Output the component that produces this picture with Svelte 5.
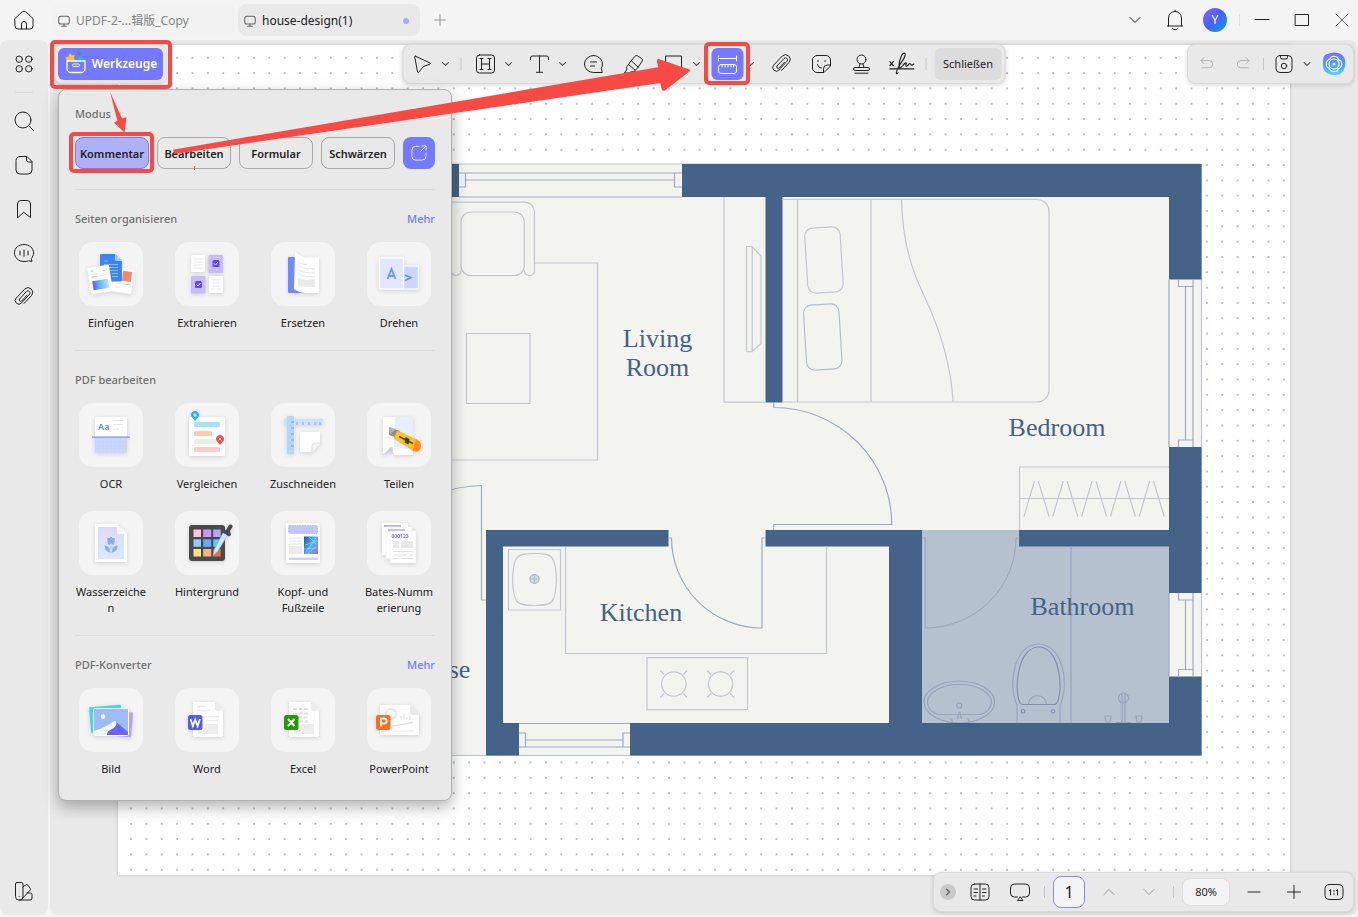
<script lang="ts">
  interface Tool {
    label: string;
    art: string;
  }

  interface Section {
    title: string;
    more: boolean;
    tools: Tool[];
  }

  // 24x24 line icons, drawn with the current text colour.
  const icons: Record<string, string> = {
    home: '<path d="M3 10.5 10.2 3.9a2.6 2.6 0 0 1 3.6 0L21 10.5V18a3 3 0 0 1-3 3H6a3 3 0 0 1-3-3ZM9.5 21v-5a2.5 2.5 0 0 1 5 0v5"/>',
    monitor: '<rect x="3" y="4" width="18" height="13" rx="3.5"/><path d="M8 21h8M12 17v4"/>',
    plus: '<path d="M12 5.5v13M5.5 12h13"/>',
    minus: '<path d="M6 12h12"/>',
    chevronDown: '<path d="m7 9.500 5 5 5-5"/>',
    chevronUp: '<path d="m7 14.500 5-5 5 5"/>',
    bell: '<path d="M5.500 18V10a6.500 6.500 0 0 1 13 0v8M4.500 18h15M12 3.500V2.200M9.500 20.500a3 3 0 0 0 5 0"/>',
    minimize: '<path d="M5 11.500h14"/>',
    maximize: '<rect x="5.500" y="6.500" width="13" height="11"/>',
    close: '<path d="m6 6 12 12M18 6 6 18"/>',
    grid: '<circle cx="7.200" cy="7.200" r="3.200"/><circle cx="16.800" cy="7.200" r="3.200"/><circle cx="7.200" cy="16.800" r="3.200"/><circle cx="16.800" cy="16.800" r="3.200"/>',
    search: '<circle cx="11" cy="11" r="8"/><path d="m17 17 4.500 4.500"/>',
    page: '<path d="M8 3.500h7l5 5V17a4 4 0 0 1-4 4H8a4 4 0 0 1-4-4V7.500a4 4 0 0 1 4-4ZM14.500 3.700V7a2 2 0 0 0 2 2h3.300"/>',
    bookmark: '<path d="M5.500 20.500V7a3.500 3.500 0 0 1 3.500-3.500h6A3.500 3.500 0 0 1 18.500 7v13.500L12 15.500Z"/>',
    chat: '<path d="M12 3.500c5.500 0 9.500 3.600 9.500 8.300 0 2.200-.8 4.200-2.200 5.700l.7 3-3.500-.7A11 11 0 0 1 12 20.500c-5.500 0-9.500-3.700-9.500-8.700S6.500 3.500 12 3.500ZM8 10v4M12 9v6.500M16 10v4"/>',
    clip: '<path d="m7.500 14 7-7.500a2 2 0 0 1 3 2.800L9.500 18a3.600 3.600 0 0 1-5.300-4.900l8.700-9.200a4.700 4.700 0 0 1 6.900 6.300L12 18.500M7.500 14a1.500 1.500 0 0 0 2.200 2l5.300-5.800"/>',
    swatch: '<path d="M5 3.500h4.500A1.500 1.500 0 0 1 11 5v12.500a3.700 3.700 0 0 1-7.500 0V5A1.500 1.500 0 0 1 5 3.500ZM11 8l2.800-2.200a1.500 1.500 0 0 1 2 .3l2.400 3.200a1.500 1.500 0 0 1-.3 2L9.500 20.500M15 14h3.500a1.500 1.500 0 0 1 1.500 1.500V19a2 2 0 0 1-2 2H7.500M7.200 17.500v.1"/>',
    cursor: '<path d="M5 4.200 19.500 11a.6.600 0 0 1 0 1.100L13 14.500l-4.800 5.800a.6.600 0 0 1-1.100-.3L4.200 4.900A.6.600 0 0 1 5 4.200Z"/>',
    highlight: '<rect x="3" y="3" width="18" height="18" rx="3"/><path d="M8 6.500v11M16 6.500v11M8 12h8M6.500 6.500h3M14.500 6.500h3M6.500 17.500h3M14.500 17.500h3"/>',
    text: '<path d="M3 7.500V6a2 2 0 0 1 2-2h14a2 2 0 0 1 2 2v1.500M12 4v16M9 20.300h6"/>',
    comment: '<path d="M12 3.500a9 8.500 0 0 1 7.800 12.700l1 4.300H12a9 8.500 0 0 1 0-17ZM9 10h6M9 14h4"/>',
    marker: '<path d="m9.500 9 4-4.800a2 2 0 0 1 2.700-.3l4 2.800a1.800 1.800 0 0 1 .4 2.500L16.500 15.500M9.500 9l-4 5.500a2 2 0 0 0-.3 1.500l.3 1L3 21h5l2-1.500 1.500.2a2 2 0 0 0 1.800-.7l3.200-3.500ZM7 12.500l6.500 5.500"/>',
    square: '<rect x="4.500" y="4" width="15.500" height="16"/>',
    measure: '<path d="M3 4v5M21 4v5M3 6.500h18"/><rect x="3" y="12.500" width="18" height="9" rx="2.500"/><path d="M6.500 12.500v2.500M9.500 12.500v2.500M12.500 12.500v2.500M15.500 12.500v2.500M18 12.500v2.500"/>',
    sticker: '<path d="M7.500 3.500h9a4.500 4.500 0 0 1 4.500 4.500v6l-6.500 6.500h-7A4.500 4.500 0 0 1 3 16V8a4.500 4.500 0 0 1 4.500-4.500ZM20.800 13H18a4 4 0 0 0-4 4v3.500M8.500 8.500v1M15.500 8.500v1M8 12.500c.5 2 2 3.500 4 3.500"/>',
    stamp: '<circle cx="12" cy="7.500" r="4.500"/><path d="M10.500 12 9.500 15.500M13.500 12l1 3.500"/><rect x="4" y="15.500" width="16" height="3" rx="1.500"/><path d="M5.500 21.200h13"/>',
    share: '<path d="M12 4H8a4.500 4.500 0 0 0-4.500 4.500V16A4.500 4.500 0 0 0 8 20.500h8a4.500 4.500 0 0 0 4.500-4.500v-4M15.500 3.500h5v5M20 4l-6 5.800"/>',
    undo: '<path d="M8 3.500 4 7.500l4 4M4 7.500h11.500a4.800 4.800 0 0 1 0 9.500H5"/>',
    redo: '<path d="m16 3.500 4 4-4 4M20 7.500H8.500a4.800 4.800 0 0 0 0 9.500H19"/>',
    save: '<rect x="4" y="3.500" width="16" height="17" rx="4"/><path d="M8.500 3.500v2a1.500 1.500 0 0 0 1.500 1.500h4a1.500 1.500 0 0 0 1.500-1.500v-2"/><circle cx="12" cy="14" r="2.700"/>',
    book: '<rect x="3" y="4" width="18" height="16" rx="3.500"/><path d="M12 4v16M6 9h3.500M6 12.500h3.500M6 16h2M14.500 9H18M14.500 12.500H18M14.500 16h2"/>',
    present: '<path d="M9.500 17h-3a4 4 0 0 1-4-4V8a4 4 0 0 1 4-4h11a4 4 0 0 1 4 4v5a4 4 0 0 1-4 4h-3M12 17l-2.500 3.500h5Z"/>',
    actual: '<rect x="3" y="4.500" width="18" height="15" rx="4"/><path d="m7.500 10.500 1-1v5.500M14.500 10.500l1-1v5.500M12 10.500v.8M12 13.700v.8"/>',
    signature: '<path d="m2 10 3 3.500M5 10l-3 3.500M2 16.200h20.500M9 19.500c-2 2.500-2-1 1-6 2.500-4 6.500-8.500 5-10.500-2-1.500-4.500 4-5 9-.4 4 1 4 3 1.500 1.500-2 3.500-3.500 3-1.500-.8 3 1 2 2 .5s1.500-1 2 0 1.500.5 2.500-.5"/>'
  };

  const sections: Section[] = [
    {
      title: 'Seiten organisieren',
      more: true,
      tools: [
        {
          label: 'Einfügen',
          art: `<g transform="rotate(8 45 38)"><rect x="34" y="26" width="20" height="25" rx="1.500" fill="#fff"/><path d="M43 29h9v10h-9z" fill="#f5876d"/><path d="M38 42h12M38 46h4" stroke="#dbe8f5"/><path d="M48 42h5" stroke="#8ccdf8"/></g>
            <path d="M22 12h14l7 7v19a1.500 1.500 0 0 1-1.500 1.500h-19A1.500 1.500 0 0 1 21 38V13a1 1 0 0 1 1-1Z" fill="#3d85f5"/><path d="m36 12 7 7h-5.500a1.500 1.500 0 0 1-1.500-1.500Z" fill="#a6ccff"/><path d="M25 19h4M25 22.500h14M25 25.500h14M25 28.500h14M33 31.500h6M33 34.500h6" stroke="#8bbaff"/>
            <g transform="rotate(-9 21 37)"><rect x="10" y="24" width="22" height="27" rx="1.500" fill="#fff"/><path d="M13 28h3" stroke="#75d3ec"/><path d="M25 29h4" stroke="#f8ca59"/><path d="M13 34h5" stroke="#f2a27f"/><path d="M20 34h9M13 31h7" stroke="#e8e8e8"/><rect x="13" y="38" width="16" height="9" fill="url(#ins)"/></g>
            <defs><linearGradient id="ins"><stop stop-color="#7b4df0"/><stop offset=".4" stop-color="#56b7ff"/><stop offset="1" stop-color="#bfe4ff"/></linearGradient></defs>`
        },
        {
          label: 'Extrahieren',
          art: `<rect x="16" y="13" width="14" height="17" rx="1" fill="#fff"/><rect x="33.500" y="13" width="14.500" height="18" rx="1" fill="#c8bdfb"/><rect x="16" y="34" width="14.500" height="17.500" rx="1" fill="#c8bdfb"/><rect x="34" y="34" width="14" height="17" rx="1" fill="#fff"/>
            <path d="M18.500 17h9M18.500 20h9M18.500 23h9M18.500 26h9M36.500 38h9M36.500 41h9M36.500 44h9M36.500 47h9" stroke="#e8e8e8"/>
            <rect x="37.500" y="18" width="7" height="7" rx="1.500" fill="#6545ea"/><rect x="20" y="39" width="7" height="7" rx="1.500" fill="#6545ea"/><path d="m39 21.500 1.500 1.500 2.500-3M21.500 42.500 23 44l2.500-3" stroke="#fff" fill="none"/>`
        },
        {
          label: 'Ersetzen',
          art: `<path d="M18 15h16v36H18a1 1 0 0 1-1-1V16a1 1 0 0 1 1-1Z" fill="#7189fa"/><path d="M24 10c4 4 9 5.500 13 5.500h10a1 1 0 0 1 1 1V50a1 1 0 0 1-1 1H35c-5 0-9-2-12-4Z" fill="#fff"/>
            <path d="M27 20c4 2 6 2.500 9 2.500M27 23.500c5 3 9 3.500 17 3.500M27 27.500c5 3 9 3.500 17 3.500M27 31.500c5 3 9 3.500 17 3.500" stroke="#e3e3e3" fill="none"/><path d="M27 36c6 2.500 11 1.500 17 1v8H35c-3 0-6-1-8-2Z" fill="#ebebeb"/>`
        },
        {
          label: 'Drehen',
          art: `<rect x="35.500" y="24" width="16" height="23" rx="1" fill="#cbd5fd" stroke="#f2f6ff" stroke-width="1.500"/><path d="m38 33 6 2.700-6 2.700" stroke="#6c8cf0" stroke-width="1.500" fill="none"/><rect x="12.500" y="16" width="24" height="31" rx="1" fill="#e0e8ff" stroke="#fafcff" stroke-width="1.500"/><path d="m20.500 37 4-10 4 10M22 34h5" stroke="#6c95f5" stroke-width="1.800" fill="none"/>`
        }
      ]
    },
    {
      title: 'PDF bearbeiten',
      more: false,
      tools: [
        {
          label: 'OCR',
          art: `<rect x="16" y="14" width="32" height="22" rx="1" fill="#fff"/><path d="M34 17.500h10M34 21.500h10M34 26h6" stroke="#e6e6e6"/><text x="19" y="27" font-size="9" font-weight="700" fill="#6c94f5">Aa</text><path d="M16 35h32v14a1 1 0 0 1-1 1H17a1 1 0 0 1-1-1Z" fill="#c8d7fb"/><path d="M20 35v15M24 35v15M28 35v15M32 35v15M36 35v15M40 35v15M44 35v15M16 39h32M16 43h32" stroke="#bccef8" stroke-width=".5"/><path d="M13 34.200h38" stroke="#6f8ff0" stroke-width="1.300"/>`
        },
        {
          label: 'Vergleichen',
          art: `<rect x="14" y="14" width="36" height="39" rx="1" fill="#fff"/><rect x="19" y="19" width="26" height="5" rx="1.500" fill="#a5e0fd"/><rect x="19" y="28" width="18" height="5" rx="1.500" fill="#ffcaa6"/><rect x="19" y="36" width="22" height="5" rx="1.500" fill="#ececec"/><rect x="19" y="44" width="26" height="5" rx="1.500" fill="#fdcccc"/>
            <path d="m20 18-2.500-3a4 4 0 1 1 5 0Z" fill="#2eaef5"/><path d="m45 42-2.500-3a4 4 0 1 1 5 0Z" fill="#f34b4f"/><path d="M18 12h4M20 10v4M43.700 34.700l2.600 2.600M46.300 34.700l-2.600 2.600" stroke="#d4f0ff"/>`
        },
        {
          label: 'Zuschneiden',
          art: `<rect x="13" y="16" width="39" height="6" fill="#cfe2fc"/><path d="M26 19v3M32 19v3M38 19v3M44 19v3M49 19v3" stroke="#7aa8f4"/><rect x="16" y="13" width="7" height="38" rx="1" fill="#b5d6fd"/><path d="M20 19h3M20 25h3M20 31h3M20 37h3M20 43h3" stroke="#719ff0"/><path d="M30 29h18a1 1 0 0 1 1 1v11l-8 8H30a1 1 0 0 1-1-1V30a1 1 0 0 1 1-1Z" fill="#fff"/><path d="M49 40h-5a3 3 0 0 0-3 3v6" fill="#f5f5f5" stroke="#e2e2e2"/>`
        },
        {
          label: 'Teilen',
          art: `<path d="M16 14h30v38H27l-2-7c-3 0-3 5-9 7Z" fill="#fff"/><path d="M28 14h18v33l-19-3Z" fill="#e9eefb"/><path d="M16 51c5-2 6-7 9-7l1 4-3 1-7 3Z" fill="#bfd0f7"/><path d="m22 24 11 4-5 6-6-2Z" fill="#8d8d91"/><path d="m22 24 7 2-6 5Z" fill="#b5b5b8"/><path d="m31 28 19 9-4 10.500-18-11.500a1.500 1.500 0 0 1-.5-2l2-5a1.500 1.500 0 0 1 1.500-1Z" fill="#fcc322" stroke="#efaa13" stroke-width=".5"/><path d="m32 33.500 14 7" stroke="#57492d" stroke-width="1.500"/><path d="m38.500 34 4 2-1 5.500-4-2Z" fill="#43413e"/><path d="m49 36.500 3 1.500c3 2 2.500 9-1.500 10.500-1.500.5-3 0-5-1Z" fill="#ff8a1e"/>`
        },
        {
          label: 'Wasserzeichen',
          art: `<path d="M17 13h21l10 10v27a1 1 0 0 1-1 1H17a1 1 0 0 1-1-1V14a1 1 0 0 1 1-1Z" fill="#fff"/><path d="M19 16h19l7 7v25H19Z" fill="url(#wmk)"/><path d="M38 13v8a2 2 0 0 0 2 2h8Z" fill="#f8f8fd"/><path d="M28 26c1 0 2 0 2 1l2-2 2 2c0-1 2-1 2-1v5a4 4 0 0 1-8 0ZM25 34c3 0 6 2 7 6 1-4 4-6 7-6 0 5-3 8-7 8s-7-3-7-8ZM31.200 33h1.600v8h-1.600Z" fill="#8caaf7" stroke="#fff" stroke-width=".5"/>
            <defs><linearGradient id="wmk" x2="0" y2="1"><stop stop-color="#e0dafb"/><stop offset="1" stop-color="#d7eafd"/></linearGradient></defs>`
        },
        {
          label: 'Hintergrund',
          art: `<rect x="14" y="14" width="36" height="36" rx="3" fill="#4a4a4d"/><path d="M18.500 18.500h7.500V26h-7.500Z" fill="#fdc3df"/><path d="M28.200 18.500h8V26h-8Z" fill="#c796ff"/><path d="M38.200 18.500h7.500V26h-7.500Z" fill="#b2a9fa"/><path d="M18.500 28.300h7.500v7.500h-7.500Z" fill="#8bd0fb"/><path d="M28.200 28.300h8v7.500h-8Z" fill="#64adfc"/><path d="M38.200 28.300h7.500v7.500h-7.500Z" fill="#55cefa"/><path d="M18.500 38h7.500v7.500h-7.500Z" fill="#ffe17d"/><path d="M28.200 38h8v7.500h-8Z" fill="#ffb285"/><path d="M38.200 38h7.500v7.500h-7.500Z" fill="#e96b4d"/>
            <path d="m48.500 21 4 3L43 40l-5 4.500 1.500-6.500Z" fill="#cde7fb" stroke="#8fb7dc" stroke-width=".6"/><path d="m46 19 3-1 2 1 3-5c2-1 4 0 3.500 2L55 20l1 4-2 1.500-8-5Z" fill="#4a4a4d"/>`
        },
        {
          label: 'Kopf- und Fußzeile',
          art: `<rect x="15" y="12" width="34" height="40" rx="1" fill="#fff"/><rect x="17.500" y="14.500" width="29" height="8" rx="1" fill="#c4c4fc" stroke="#a9a9f8" stroke-width=".7" stroke-dasharray="1.500 1"/><path d="M18 27h13M18 30h13M18 33h13" stroke="#e6e6e6"/><rect x="18" y="35" width="13" height="8" fill="#ececec"/><rect x="33" y="25.500" width="14" height="17.500" fill="url(#hdr)"/><path d="m34 42 11-15M34 34l12-4M36 43l9-7M33 38l13-1M38 26l8 8" stroke="#a6d9ff" stroke-width=".6"/><path d="M18 47.800h29" stroke="#cfcffd" stroke-width="2.500"/>
            <defs><linearGradient id="hdr" x2="1" y2=".6"><stop stop-color="#294ea1"/><stop offset=".6" stop-color="#43b9ef"/><stop offset="1" stop-color="#9b7ed9"/></linearGradient></defs>`
        },
        {
          label: 'Bates-Nummerierung',
          art: `<path d="M15 12h26v32H15Z" fill="#fff"/><path d="M17 15h17" stroke="#b4b0f6" stroke-width="2"/><path d="M19 16h26v32H19Z" fill="#fff" stroke="#ebebeb" stroke-width=".6"/><path d="M21 19.200h17" stroke="#b4b0f6" stroke-width="2"/><path d="M23 20h26v32H23Z" fill="#fff" stroke="#ebebeb" stroke-width=".6"/><text x="24.500" y="27" font-size="5" font-weight="700" fill="#7670ee">000123</text><path d="M26 30h6v7h-6ZM34 30h12v7H34Z" fill="#e8e8e8"/><path d="M26 40.500h20M26 44h14M42 44h4M26 47.500h6M34 47.500h12" stroke="#e3e3e3" stroke-width="1.200"/>`
        }
      ]
    },
    {
      title: 'PDF-Konverter',
      more: true,
      tools: [
        {
          label: 'Bild',
          art: `<rect x="11" y="18" width="32" height="26" rx="1" fill="#3fd9e8" transform="rotate(-5 27 31)"/><rect x="19" y="23" width="34" height="25" rx="1" fill="#bd9df8" transform="rotate(5 36 36)"/><rect x="14.500" y="20.500" width="35" height="27" rx="1" fill="#9cbcfb" stroke="#fff"/><circle cx="24" cy="28.500" r="2.300" fill="#fff"/><path d="M15 43c8-3 14-5 20-10 4 0 3 4 0 7-3 2-6 3-6 7H15Z" fill="#fff" opacity=".85"/><path d="m37 34 12 10v3H28c0-5 5-5 8-8 1-2 2-3 1-5Z" fill="#6d63f5"/>`
        },
        {
          label: 'Word',
          art: `<path d="M19 14h21l8 9v25a1 1 0 0 1-1 1H19a1 1 0 0 1-1-1V15a1 1 0 0 1 1-1Z" fill="#fff"/><path d="M40 14v7a2 2 0 0 0 2 2h6Z" fill="#ededed"/><path d="M22 18.500h8M22 22.500h13M22 28.500h21M31 32.500h12" stroke="#ebebeb" stroke-width="1.400"/><path d="M30 36h13v10H23v-4h7Z" fill="#ededed"/><rect x="13" y="27" width="14.500" height="15" rx="2.500" fill="#505bf0"/><path d="m15.500 31 2.300 7 2.400-6.500 2.400 6.500 2.400-7" stroke="#fff" stroke-width="1.800" fill="none"/>`
        },
        {
          label: 'Excel',
          art: `<path d="M19 14h21l8 9v25a1 1 0 0 1-1 1H19a1 1 0 0 1-1-1V15a1 1 0 0 1 1-1Z" fill="#fff"/><path d="M40 14v7a2 2 0 0 0 2 2h6Z" fill="#ededed"/><path d="M22 21h15M22 25.500h15M27 29.500h10M28 33.500h9" stroke="#e0e0e0" stroke-width="2" stroke-dasharray="4 1.500"/><path d="M30 36h13v10H23v-4h7Z" fill="#ededed"/><rect x="13" y="27" width="14.500" height="15" rx="2.500" fill="#239b09"/><path d="m17 31 6.500 7M23.500 31 17 38" stroke="#fff" stroke-width="2" fill="none"/>`
        },
        {
          label: 'PowerPoint',
          art: `<path d="M14 17h29l9 10v19a1 1 0 0 1-1 1H14a1 1 0 0 1-1-1V18a1 1 0 0 1 1-1Z" fill="#fff"/><path d="M43 17v8a2 2 0 0 0 2 2h7Z" fill="#e9e9e9"/><circle cx="24" cy="26" r="5" fill="none" stroke="#e9e9e9" stroke-width="2.500"/><path d="M34 32v-4M37 32v-6M40 32v-3M43 32v-5" stroke="#e3e3e3" stroke-width="1.300"/><path d="m25 38 7-1 6-1 8-2" stroke="#d8d8d8" fill="none"/><path d="M18 43h29" stroke="#ececec"/><rect x="9" y="27" width="14.500" height="15" rx="2.500" fill="#fb6d19"/><path d="M14 38.500v-8h3.200a2.500 2.500 0 0 1 0 5H14" stroke="#fff" stroke-width="1.800" fill="none"/>`
        }
      ]
    }
  ];

  const modes = ['Kommentar', 'Bearbeiten', 'Formular', 'Schwärzen'];
  const hangers = [0, 1, 2, 3, 4];
  const burners = [673.8, 720.6];

  let mode = $state('Kommentar');
  let pageNumber = $state('1');
</script>

{#snippet icon(name: string, size: number = 24)}
  <svg class="icon" width={size} height={size} viewBox="0 0 24 24" aria-hidden="true">{@html icons[name]}</svg>
{/snippet}

{#snippet tool(name: string, label: string)}
  <button class="tool" aria-label={label}>{@render icon(name)}</button>
{/snippet}

{#snippet drop(label: string)}
  <button class="drop" aria-label={label}>{@render icon('chevronDown', 14)}</button>
{/snippet}

<div class="app">
  <header class="titlebar">
    <button class="tool home" aria-label="Start">{@render icon('home')}</button>
    <nav class="tabs">
      <button class="tab">{@render icon('monitor', 14)}<span>UPDF-2-...辑版_Copy</span></button>
      <button class="tab current">{@render icon('monitor', 14)}<span>house-design(1)</span><i class="unsaved"></i></button>
      <button class="add" aria-label="Neuer Tab">{@render icon('plus', 20)}</button>
    </nav>
    <div class="group">
      {@render tool('chevronDown', 'Tabs')}
      {@render tool('bell', 'Benachrichtigungen')}
      <button class="tool"><span class="avatar">Y</span></button>
    </div>
    <i class="sep"></i>
    <div class="group">
      {@render tool('minimize', 'Minimieren')}
      {@render tool('maximize', 'Maximieren')}
      <button class="tool faded" aria-label="Fenster schließen">{@render icon('close')}</button>
    </div>
  </header>

  <div class="body">
    <aside class="sidebar">
      {@render tool('grid', 'Miniaturen')}
      <hr />
      {@render tool('search', 'Suchen')}
      {@render tool('page', 'Seiten')}
      {@render tool('bookmark', 'Lesezeichen')}
      {@render tool('chat', 'Kommentare')}
      {@render tool('clip', 'Anhänge')}
      <div class="sidebar-end">{@render tool('swatch', 'Darstellung')}</div>
    </aside>

    <main>
      <div class="page">
        <svg class="plan" viewBox="118 45 1172 830" role="img" aria-label="house-design(1)">
          <defs>
            <pattern id="dots" x="123.300" y="50.140" width="15.370" height="15.320" patternUnits="userSpaceOnUse">
              <circle cx="7.700" cy="7.700" r="1" fill="#a8aaac" />
            </pattern>
            <clipPath id="bath"><path d="M922 530h247v193H922z" /></clipPath>
          </defs>
          <path d="M118 45h1172v830H118z" fill="url(#dots)" />

          <!-- floors -->
          <path d="M280 164h921.500v591.500H280z" fill="#f3f4f0" stroke="#b6c3cf" />
          <path d="M922 530h247v193H922z" fill="#b6c1cf" />

          <!-- walls -->
          <path
            fill="#456288"
            d="M280 164h179v33H280zM682 164h519.500v115.500H1169V197H782.500v205.500h-17V197H682zM1169 447h32.500v146H1169v-46.500h-150V530h150zM486 530h182.500v16.500H503V723h16v32.500h-33zM765.500 530H922v193h247v-46.500h32.500v79H630V723h259V546.500H765.500z"
          />

          <!-- windows and doors -->
          <g class="frame">
            <path d="M459 173h223M465.500 180h209M459 197h223M459 187h6.500v-14M682 187h-7.500v-14" />
            <path d="M1169 280v167M1185.500 286.500V440M1193 280v167M1178.500 280v6.500h14.500M1178.500 447v-7h14.500" />
            <path d="M1169 593v83M1185.500 600v69.500M1193 593v83M1178.500 593v7h14.500M1178.500 676v-6.500h14.500" />
            <path d="M519 723.500h111M525.500 740H623M519 747h111M519 733h6.500v14M630 733h-7v14" />
            <path d="M773.700 402v5.500a118 117 0 0 1 118 117H773.700v5.500" />
            <path d="M668.500 538h3a90.500 90 0 0 0 90.500 90V538h3.500" />
            <path d="M440 493q20-7 41.500-7.500V600h4.500" />
            <path d="M922 538h3.500v90a90.500 90 0 0 0 90.500-90h3.500" />
          </g>

          <!-- furniture -->
          <g class="furniture">
            <path d="M440 202.200h84.500a10 10 0 0 1 10 10v58.300a5 5 0 0 1-10.200 0M461 270.500a5 5 0 0 1-10 0V212" />
            <rect x="461" y="212" width="63.300" height="63.700" rx="10" />
            <path d="M534.700 263H597.500v197H440M466.500 333.500H530v70h-63.500z" />
            <path d="M724 197v205.200h41.500M746.500 246.500h5.700v105.200h-5.700zM752.200 247l8.800 9v87.500l-8.800 8" />
            <path d="M782.500 199.500H1037a12 12 0 0 1 12 12v178.500a12 12 0 0 1-12 12H782.500M797.500 199.500v202.200M871 199.500v202.200" />
            <path d="M901.500 199.500c1 44 11 72 22 95s27 60 29.500 107" />
            <rect x="806.200" y="227.500" width="35.500" height="65" rx="8" transform="rotate(-3.500 824 260)" />
            <rect class="dark" x="805" y="304.500" width="35.500" height="65" rx="8" transform="rotate(-3.500 822.800 337)" />
            <path d="M1169 467h-149.500v63M1019.500 498.500H1169" />
            {#each hangers as n (n)}
              <path d="m1034.500 481-10.500 35.500M1038.300 481l10.700 35.500" transform="translate({n * 28.8} 0)" />
            {/each}
            <path d="M508.500 549.500h52V610h-52zM565.500 546.500v107h261v-107" />
            <path d="M534.500 553.500c18 0 21 2 22 26-1 24-4 26-22 26s-21-2-22-26c1-24 4-26 22-26z" />
            <circle cx="534.500" cy="579" r="4.500" class="drain" />
            <path class="dark" d="M530 579h9M534.500 574.500v9" />
            <path d="M647 657.700h100.500v52H647z" />
            {#each burners as x (x)}
              <circle cx={x} cy="684" r="12.200" />
              <path d="m{x - 13.5} 670.500 4 4m19 19 4 4m0-27-4 4m-19 19-4 4" />
            {/each}
          </g>

          <g class="fixtures" clip-path="url(#bath)">
            <path d="M1071 546v177" />
            <ellipse cx="959.300" cy="702" rx="35.300" ry="21" />
            <path d="M938 714.500c-9-3-10-8-10.500-12 0-10 14-18 32-18s32 8 32 18c-.5 4-2 9-11 12z" />
            <circle cx="959.300" cy="705.500" r="2.500" />
            <path d="m957.500 719 1.500-7h1l1.500 7M949 719h3v4M966 719h3v4" />
            <path d="M1017 723v-18c-10-22-2-61 21.500-61s32 39 21.500 61v18" />
            <path class="dark" d="M1022 704.500c-8-2-8-57 16.500-57.500s25 55 16.500 57.500z" />
            <path d="M1028.500 704c1-11 17-11 18 0" />
            <circle class="dark" cx="1023" cy="711.300" r="1.800" />
            <circle class="dark" cx="1053" cy="711.300" r="1.800" />
            <circle cx="1123.500" cy="698" r="5" />
            <path d="M1122 693v30M1125 693v30M1116 722.500h15M1105 716h6l-1 6h-4zM1136 716h6l-1 6h-4z" />
          </g>

          <g class="room">
            <text x="657.500" y="347">Living</text>
            <text x="657.500" y="376">Room</text>
            <text x="1057" y="436">Bedroom</text>
            <text x="641" y="621">Kitchen</text>
            <text x="1082.500" y="615">Bathroom</text>
            <text x="459.500" y="678">se</text>
          </g>
        </svg>
      </div>

      <div class="bar tools-bar">
        <button class="tools-button">
          <svg width="24" height="24" viewBox="0 0 24 24" aria-hidden="true">
            <path d="m6 .8 1.700 2.400 3-.2-.8 2.800L11 9H3.500L1 5.500l3.500-1z" fill="#fbc62b" />
            <circle cx="15" cy="1.500" r="1.700" fill="#16a59a" />
            <path d="M12 9c2-3 4.500-4.500 7-3.500L20.500 9z" fill="#29b2ff" />
            <path d="M3 9h18v7.500a4 4 0 0 1-4 4H7a4 4 0 0 1-4-4z" fill="none" stroke="#fff" stroke-width="1.300" />
            <rect x="8.500" y="12" width="7" height="2.500" rx="1.200" fill="none" stroke="#fff" />
          </svg>
          Werkzeuge
        </button>
      </div>

      <div class="bar top-bar">
        <span class="split">{@render tool('cursor', 'Auswählen')}{@render drop('Auswahloptionen')}</span>
        <i class="sep"></i>
        <span class="split">{@render tool('highlight', 'Hervorheben')}{@render drop('Markierungen')}</span>
        <span class="split">{@render tool('text', 'Text')}{@render drop('Textoptionen')}</span>
        {@render tool('comment', 'Notiz')}
        {@render tool('marker', 'Stift')}
        <span class="split">{@render tool('square', 'Formen')}{@render drop('Formoptionen')}</span>
        <span class="split">
          <button class="tool active" aria-label="Messen">{@render icon('measure')}</button>{@render drop('Messoptionen')}
        </span>
        {@render tool('clip', 'Anhang')}
        {@render tool('sticker', 'Sticker')}
        {@render tool('stamp', 'Stempel')}
        <button class="tool" aria-label="Signatur">{@render icon('signature', 28)}</button>
        <i class="sep"></i>
        <button class="done">Schließen</button>
      </div>

      <div class="bar action-bar">
        <button class="tool disabled" aria-label="Rückgängig">{@render icon('undo', 18)}</button>
        <button class="tool disabled" aria-label="Wiederholen">{@render icon('redo', 18)}</button>
        <i class="sep"></i>
        <span class="split">{@render tool('save', 'Speichern')}{@render drop('Speicheroptionen')}</span>
        <button class="tool" aria-label="UPDF AI">
          <svg width="24" height="24" viewBox="0 0 24 24" aria-hidden="true">
            <defs>
              <linearGradient id="ai" x2="0" y2="1"><stop stop-color="#7c72fb" /><stop offset=".5" stop-color="#479cf9" /><stop offset="1" stop-color="#51d7fb" /></linearGradient>
            </defs>
            <path d="M7 1.500C14-1 23 1 23.300 10S19 24 11 23 .5 18 1 10 3 3 7 1.500z" fill="url(#ai)" />
            <g fill="none" stroke="#fff" stroke-width="1.100">
              <circle cx="12" cy="12" r="5" />
              <path d="M8 8c0-5 7-5 9 0M16 8c5 0 5 7 0 9M16 16c0 5-7 5-9 0M8 16c-5 0-5-7 0-9" />
            </g>
            <circle cx="12" cy="12" r="1.500" fill="#fff" />
          </svg>
        </button>
      </div>

      <section class="panel">
        <h2>Modus</h2>
        <div class="modes">
          {#each modes as name (name)}
            <button class="mode" class:selected={mode === name} onclick={() => (mode = name)}>{name}</button>
          {/each}
          <button class="share" aria-label="Teilen">{@render icon('share', 20)}</button>
        </div>

        {#each sections as section (section.title)}
          <div class="section">
            <div class="section-head">
              <h2>{section.title}</h2>
              {#if section.more}<a href="#mehr">Mehr</a>{/if}
            </div>
            <div class="tiles">
              {#each section.tools as item (item.label)}
                <button class="tile">
                  <svg class="art" width="64" height="64" viewBox="0 0 64 64" aria-hidden="true">
                    <g class="shapes">{@html item.art}</g>
                  </svg>
                  <span class:single={!item.label.includes(' ')}>{item.label}</span>
                </button>
              {/each}
            </div>
          </div>
        {/each}
      </section>

      <div class="bar page-bar">
        <button class="collapse" aria-label="Leiste einklappen">{@render icon('chevronDown', 14)}</button>
        {@render tool('book', 'Seitenansicht')}
        {@render tool('present', 'Präsentation')}
        <i class="sep"></i>
        <input class="page-number" aria-label="Seite" bind:value={pageNumber} />
        <button class="tool disabled" aria-label="Vorherige Seite">{@render icon('chevronUp')}</button>
        <button class="tool disabled" aria-label="Nächste Seite">{@render icon('chevronDown')}</button>
        <i class="sep"></i>
        <button class="zoom">80%</button>
        {@render tool('minus', 'Verkleinern')}
        {@render tool('plus', 'Vergrößern')}
        {@render tool('actual', 'Originalgröße')}
      </div>
    </main>
  </div>

  <svg class="marks" width="760" height="180" viewBox="0 0 760 180" aria-hidden="true">
    <g fill="none" stroke="#f84a45" stroke-width="4">
      <rect x="52" y="42" width="118" height="45" rx="3" />
      <rect x="71" y="134" width="81" height="37" rx="3" />
      <rect x="706" y="44" width="42" height="39" rx="3" />
    </g>
    <path
      d="m173 149.700 485.300-82.500-1.500-6q0-2.500 2.500-2l29.500 10q2.500 1.300 0 2.800l-24 18.500q-2.500 1-3-1l-1.500-6.500-486 71z"
      fill="#f84a45"
    />
    <path d="M110 91.700 122 118.500l4.500-1.200-2 15.200-10.500-9.800 3.300-2.200z" fill="#f84a45" />
    <path d="M194.500 166v4" stroke="#f84a45" />
  </svg>
</div>

<style>
  :global(body) {
    margin: 0;
  }

  .app {
    position: relative;
    box-sizing: border-box;
    display: flex;
    flex-direction: column;
    min-height: 100vh;
    padding-bottom: 2px;
    background: #f4f4f4;
    color: #222;
    font-family: 'Noto Sans', 'Noto Sans CJK SC', sans-serif;
    font-size: 11px;
    line-height: 16px;
  }

  button,
  input {
    box-sizing: border-box;
    padding: 0;
    border: 0;
    background: none;
    color: inherit;
    font: inherit;
  }

  button {
    display: flex;
    align-items: center;
    justify-content: center;
    flex: none;
  }

  .icon {
    display: block;
    flex: none;
    overflow: visible;
    fill: none;
    stroke: currentColor;
    stroke-width: 1;
    stroke-linecap: round;
    stroke-linejoin: round;
  }

  .tool {
    width: 32px;
    height: 32px;
    border-radius: 6px;
  }

  .tool.active {
    background: #7579ff;
    color: #fff;
  }

  .disabled {
    color: #a0a0a0;
  }

  .faded {
    color: #666;
  }

  .drop {
    width: 14px;
    height: 32px;
    color: #555;
  }

  .drop .icon {
    stroke-width: 2;
  }

  .sep {
    flex: none;
    width: 1px;
    height: 12px;
    background: #c8c8c8;
  }

  /* title bar */
  .titlebar {
    display: flex;
    align-items: center;
    height: 40px;
  }

  .home {
    margin: 0 12px 0 8px;
  }

  .tabs {
    display: flex;
    flex: 1;
    align-items: center;
    gap: 4px;
  }

  .tab {
    justify-content: flex-start;
    gap: 5px;
    width: 182px;
    height: 32px;
    padding: 2px 11px 0 5px;
    border-radius: 8px;
    background: #f2f2f2;
    color: #858585;
    font-size: 12px;
  }

  .tab.current {
    background: #e9e9e9;
    color: #222;
  }

  .tab .icon {
    stroke-width: 1.8;
    color: #666;
  }

  .unsaved {
    width: 6px;
    height: 6px;
    margin-left: auto;
    border-radius: 50%;
    background: #a9adf8;
  }

  .add {
    width: 32px;
    height: 32px;
    color: #888;
  }

  .group {
    display: flex;
    gap: 8px;
  }

  .avatar {
    width: 24px;
    height: 24px;
    border-radius: 50%;
    background: linear-gradient(135deg, #8a62fa, #4662fb 50%, #00a4d0);
    color: #fff;
    font-size: 12px;
    line-height: 24px;
  }

  .titlebar > .sep {
    margin: 0 6px 0 8px;
    background: #e2e2e2;
  }

  /* body */
  .body {
    display: flex;
    flex: 1;
    gap: 2px;
  }

  .sidebar {
    box-sizing: border-box;
    display: flex;
    flex-direction: column;
    align-items: center;
    gap: 12px;
    width: 48px;
    padding: 8px 0;
    border-radius: 8px;
    background: #e9e9e9;
  }

  .sidebar hr {
    width: 18px;
    height: 1px;
    margin: 0;
    border: 0;
    background: #d8d8d8;
  }

  .sidebar-end {
    margin-top: auto;
  }

  main {
    position: relative;
    box-sizing: border-box;
    display: flex;
    flex: 1;
    min-width: 0;
    padding: 5px 68px 40px;
    border-radius: 8px;
    background: #e9e9e9;
  }

  .page {
    flex: 1;
    min-width: 0;
    background: #fff;
    box-shadow: 0 0 3px rgba(0, 0, 0, 0.2);
  }

  .plan {
    display: block;
    width: 100%;
    height: 100%;
  }

  .frame,
  .furniture,
  .fixtures {
    fill: none;
    stroke-width: 1.2;
  }

  .frame {
    stroke: #9daabf;
  }

  .furniture {
    stroke: #c3c6d3;
  }

  .furniture .dark {
    stroke: #b1bfcc;
  }

  .furniture .drain {
    fill: #d5dae2;
    stroke: #a9b2c4;
  }

  .fixtures {
    stroke: #97a4bc;
  }

  .fixtures .dark {
    stroke: #8090b0;
  }

  .room {
    fill: #456288;
    font-family: 'Liberation Serif', serif;
    font-size: 26px;
    text-anchor: middle;
  }

  /* floating bars */
  .bar {
    position: absolute;
    box-sizing: border-box;
    display: flex;
    align-items: center;
    height: 40px;
    padding: 0 3px;
    border: 1px solid #dadada;
    border-radius: 8px;
    background: #e9e9e9;
    box-shadow: 0 1px 4px rgba(0, 0, 0, 0.16);
  }

  .split {
    display: flex;
  }

  .tools-bar {
    top: 4px;
    left: 4px;
  }

  .top-bar {
    top: 4px;
    left: 50%;
    gap: 8px;
    transform: translateX(-50%);
  }

  .action-bar {
    top: 4px;
    right: 4px;
    gap: 4px;
  }

  .page-bar {
    right: 4px;
    bottom: 3px;
    gap: 8px;
    padding-left: 6px;
  }

  .tools-button {
    gap: 4px;
    width: 105px;
    height: 32px;
    border-radius: 6px;
    background: #7579ff;
    color: #fff;
    font-size: 12px;
    font-weight: 600;
  }

  .done {
    width: 67px;
    height: 32px;
    border-radius: 6px;
    background: #dcdcdc;
  }

  .collapse {
    width: 16px;
    height: 16px;
    border-radius: 50%;
    background: #c9c9c9;
    color: #555;
    transform: rotate(-90deg);
  }

  .collapse .icon {
    stroke-width: 2;
  }

  .page-number {
    width: 32px;
    height: 32px;
    border: 1px solid #8488ff;
    border-radius: 8px;
    background: #f4f4f4;
    font-size: 16px;
    text-align: center;
  }

  .zoom {
    width: 48px;
    height: 28px;
    border: 1px solid #dedede;
    border-radius: 8px;
    background: #f4f4f4;
  }

  /* tools panel */
  .panel {
    position: absolute;
    top: 49px;
    left: 8px;
    box-sizing: border-box;
    width: 394px;
    padding: 14px 16px 4px;
    border: 1px solid #b0b0b0;
    border-radius: 8px;
    background: #e9e9e9;
    box-shadow: 0 6px 16px rgba(0, 0, 0, 0.3);
  }

  h2 {
    margin: 0;
    color: #707070;
    font-size: 11px;
    font-weight: 500;
    line-height: 20px;
  }

  .modes {
    display: flex;
    gap: 8px;
    margin: 13px 0 20px;
  }

  .mode {
    flex: 1;
    height: 32px;
    padding-top: 2px;
    border: 1px solid #a9a9a9;
    border-radius: 8px;
    font-weight: 600;
  }

  .mode.selected {
    border-color: #7579ff;
    background: #afb1f6;
  }

  .share {
    width: 32px;
    height: 32px;
    border-radius: 8px;
    background: #7579ff;
    color: #fff;
  }

  .section {
    padding: 19px 0;
    border-top: 1px solid #dcdcdc;
  }

  .section-head {
    display: flex;
    justify-content: space-between;
    margin-bottom: 13px;
    line-height: 20px;
  }

  .section-head a {
    color: #7579ff;
    font-weight: 500;
    text-decoration: none;
  }

  .tiles {
    display: grid;
    grid-template-columns: repeat(4, 72px);
    justify-content: space-between;
    row-gap: 19px;
  }

  .tile {
    flex-direction: column;
    justify-content: flex-start;
    gap: 9px;
    text-align: center;
  }

  .tile span {
    width: 100%;
  }

  .tile .single {
    word-break: break-all;
  }

  .art {
    display: block;
    border-radius: 14px;
    background: #f4f4f4;
  }

  .shapes {
    filter: drop-shadow(0 1px 2px rgba(0, 0, 0, 0.14));
  }

  .marks {
    position: absolute;
    top: 0;
    left: 0;
    pointer-events: none;
  }
</style>
